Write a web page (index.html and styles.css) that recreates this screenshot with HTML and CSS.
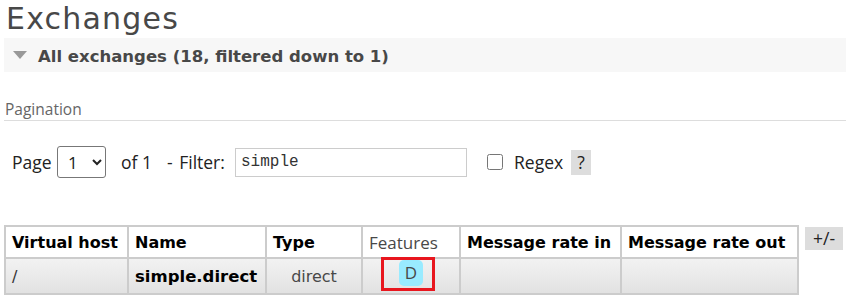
FILE: index.html
```html
<!DOCTYPE html>
<html lang="en">
<head>
  <meta charset="UTF-8">
  <title>Exchanges - RabbitMQ Management</title>
  <meta name="viewport" content="width=device-width, initial-scale=1.0"/>
  <link rel="stylesheet" href="styles.css">
</head>
<body>
  <h1>Exchanges</h1>

  <div class="section">
    <h2 class="toggle"><span class="arrow"></span>All exchanges (18, filtered down to 1)</h2>

    <div class="pagination">
      <h3>Pagination</h3>
      <div class="filter-row">
        <label class="page-label">Page</label>
        <select class="page-select">
          <option>1</option>
        </select>
        <span class="of">of 1</span>
        <label class="filter-label">- Filter:</label>
        <input type="text" class="filter" value="simple">
        <input type="checkbox" class="regex-box">
        <label class="regex-label">Regex</label>
        <span class="help">?</span>
      </div>
    </div>

    <div class="table-wrap">
      <table class="list">
        <thead>
          <tr>
            <th class="c-vhost">Virtual host</th>
            <th class="c-name">Name</th>
            <th class="c-type">Type</th>
            <th class="c-feat plain">Features</th>
            <th class="c-in">Message rate in</th>
            <th class="c-out">Message rate out</th>
          </tr>
        </thead>
        <tbody>
          <tr>
            <td>/</td>
            <td class="bold">simple.direct</td>
            <td class="center">direct</td>
            <td class="features">
              <div class="feat-cell"><span class="marked"><abbr class="badge">D</abbr></span></div>
            </td>
            <td></td>
            <td></td>
          </tr>
        </tbody>
      </table>
      <span class="plusminus">+/-</span>
    </div>
  </div>
</body>
</html>
```

FILE: styles.css
```css
body { margin: 0; padding: 0 0 0 4px; font-family: "DejaVu Sans", Verdana, sans-serif; color: #484848; background: #fff; }
h1 { margin: 0; padding: 0 0 0 2px; font-size: 30px; letter-spacing: 1.2px; font-weight: normal; line-height: 38px; height: 38px; }
.toggle { margin: 0; height: 34px; padding-top: 2px; box-sizing: border-box; display: flex; align-items: center; background: #f7f7f7; font-size: 16.5px; font-weight: bold; color: #484848; }
.arrow { width: 0; height: 0; border-left: 7.5px solid transparent; border-right: 7.5px solid transparent; border-top: 8px solid #999; margin: -2px 11px 0 9px; }
.pagination h3 { margin: 0; padding: 28px 0 2px 1px; font-family: "Open Sans", "DejaVu Sans", sans-serif; font-size: 15.5px; font-weight: normal; color: #666; border-bottom: 1px solid #ddd; line-height: 18px; }
.filter-row { display: flex; align-items: center; height: 36px; margin-top: 23px; padding-left: 8px; font-size: 17.5px; font-family: "Open Sans", "DejaVu Sans", sans-serif; color: #222; white-space: nowrap; }
.page-label { width: 38px; margin-right: 7px; }
.page-select { width: 49px; height: 32px; margin: 0 15px 0 0; font-size: 17px; font-family: "Open Sans", sans-serif; border: 1px solid #777; border-radius: 3px; background: #fff; color: #222; padding: 0 4px 0 6px; }
.of { width: 31px; margin-right: 15px; }
.filter-label { width: 61px; margin-right: 7px; word-spacing: 2px; }
.filter { width: 232px; height: 29px; box-sizing: border-box; border: 1px solid #ccc; padding: 0 5px; font-family: "Liberation Mono", monospace; font-size: 16px; color: #333; margin: 0 20px 0 0; }
.regex-box { width: 16px; height: 16px; margin: 0 11px 0 0; }
.regex-label { width: 51px; margin-right: 6px; }
.help { background: #ddd; width: 20px; height: 25px; line-height: 25px; text-align: center; }
.table-wrap { display: flex; align-items: flex-start; margin-top: 45px; }
.list { border-collapse: collapse; font-size: 16px; }
.list th { border: 2px solid #ccc; height: 30px; padding: 0 6px; text-align: left; color: #000; background: #fff; font-weight: bold; white-space: nowrap; }
.list th.plain { font-weight: normal; color: #484848; font-family: "Open Sans", "DejaVu Sans", sans-serif; font-size: 17px; }
.list td { border: 2px solid #ccc; height: 34px; padding: 0 6px; background: linear-gradient(#f2f2f2, #e2e2e2); color: #333; font-size: 16px; white-space: nowrap; }
.c-vhost { width: 109px; }
.c-name { width: 124px; }
.c-type { width: 82px; }
.c-feat { width: 84px; }
.c-in { width: 147px; }
.c-out { width: 163px; }
.list td.bold { font-weight: bold; color: #000; font-size: 16.5px; }
.list td.center { text-align: center; color: #484848; }
.list td.features { vertical-align: top; padding: 0; }
.feat-cell { display: flex; justify-content: center; margin: -2px 0 0 -6px; }
.marked { display: block; border: 3px solid #e8161e; padding: 0 9px 2px 15px; }
.badge { display: block; background: #99ebff; border-radius: 5px; width: 24px; height: 26px; line-height: 26px; text-align: center; text-decoration: none; font-family: "Open Sans", "DejaVu Sans", sans-serif; font-size: 17px; color: #484848; }
.plusminus { background: #ddd; margin: 2px 0 0 6px; padding: 0 8px; height: 23px; line-height: 23px; font-size: 17.5px; font-family: "Open Sans", "DejaVu Sans", sans-serif; color: #222; }
```
